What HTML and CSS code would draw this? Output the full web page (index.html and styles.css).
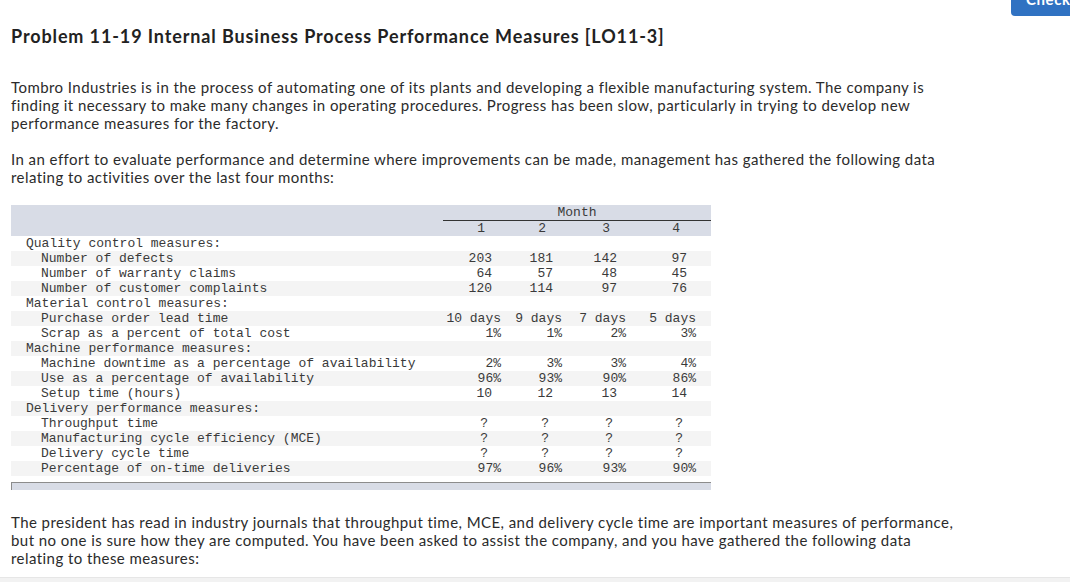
FILE: index.html
```html
<!DOCTYPE html>
<html lang="en">
<head>
<meta charset="utf-8">
<title>Problem 11-19</title>
<link rel="stylesheet" href="styles.css">
</head>
<body>
<div class="topbar"><button class="check">Check</button></div>
<main class="page">
  <h1 class="title">Problem 11-19 Internal Business Process Performance Measures [LO11-3]</h1>
  <p class="para">Tombro Industries is in the process of automating one of its plants and developing a flexible manufacturing system. The company is finding it necessary to make many changes in operating procedures. Progress has been slow, particularly in trying to develop new performance measures for the factory.</p>
  <p class="para">In an effort to evaluate performance and determine where improvements can be made, management has gathered the following data relating to activities over the last four months:</p>

  <div class="tablewrap">
    <table class="data">
      <colgroup>
        <col class="c-label"><col class="c1"><col class="c2"><col class="c3"><col class="c4"><col class="c5">
      </colgroup>
      <thead>
        <tr><th></th><th colspan="5" class="month">Month</th></tr>
        <tr><th></th><th class="hn">1</th><th class="hn">2</th><th class="hn">3</th><th class="hn">4</th><th></th></tr>
      </thead>
      <tbody>
        <tr><td class="cat">Quality control measures:</td><td></td><td></td><td></td><td></td><td></td></tr>
        <tr><td class="sub">Number of defects</td><td class="n">203</td><td class="n">181</td><td class="n">142</td><td class="n">97</td><td></td></tr>
        <tr><td class="sub">Number of warranty claims</td><td class="n">64</td><td class="n">57</td><td class="n">48</td><td class="n">45</td><td></td></tr>
        <tr><td class="sub">Number of customer complaints</td><td class="n">120</td><td class="n">114</td><td class="n">97</td><td class="n">76</td><td></td></tr>
        <tr><td class="cat">Material control measures:</td><td></td><td></td><td></td><td></td><td></td></tr>
        <tr><td class="sub">Purchase order lead time</td><td class="p">10 days</td><td class="p">9 days</td><td class="p">7 days</td><td class="p">5 days</td><td></td></tr>
        <tr><td class="sub">Scrap as a percent of total cost</td><td class="p">1%</td><td class="p">1%</td><td class="p">2%</td><td class="p">3%</td><td></td></tr>
        <tr><td class="cat">Machine performance measures:</td><td></td><td></td><td></td><td></td><td></td></tr>
        <tr><td class="sub">Machine downtime as a percentage of availability</td><td class="p">2%</td><td class="p">3%</td><td class="p">3%</td><td class="p">4%</td><td></td></tr>
        <tr><td class="sub">Use as a percentage of availability</td><td class="p">96%</td><td class="p">93%</td><td class="p">90%</td><td class="p">86%</td><td></td></tr>
        <tr><td class="sub">Setup time (hours)</td><td class="n">10</td><td class="n">12</td><td class="n">13</td><td class="n">14</td><td></td></tr>
        <tr><td class="cat">Delivery performance measures:</td><td></td><td></td><td></td><td></td><td></td></tr>
        <tr><td class="sub">Throughput time</td><td class="q">?</td><td class="q">?</td><td class="q">?</td><td class="q">?</td><td></td></tr>
        <tr><td class="sub">Manufacturing cycle efficiency (MCE)</td><td class="q">?</td><td class="q">?</td><td class="q">?</td><td class="q">?</td><td></td></tr>
        <tr><td class="sub">Delivery cycle time</td><td class="q">?</td><td class="q">?</td><td class="q">?</td><td class="q">?</td><td></td></tr>
        <tr><td class="sub">Percentage of on-time deliveries</td><td class="p">97%</td><td class="p">96%</td><td class="p">93%</td><td class="p">90%</td><td></td></tr>
      </tbody>
    </table>
    <div class="tablefoot"></div>
  </div>

  <p class="para after">The president has read in industry journals that throughput time, MCE, and delivery cycle time are important measures of performance, but no one is sure how they are computed. You have been asked to assist the company, and you have gathered the following data relating to these measures:</p>
</main>
<div class="bottomstrip"></div>
</body>
</html>
```

FILE: styles.css
```css
html, body {
  margin: 0;
  padding: 0;
  background: #ffffff;
  overflow: hidden;
}

body {
  font-family: Lato, "Open Sans", "Liberation Sans", sans-serif;
  color: #222222;
  height: 582px;
  position: relative;
}

.topbar {
  display: flex;
  justify-content: flex-end;
  height: 16px;
}

.check {
  margin-top: -18px;
  margin-right: -12px;
  height: 34px;
  width: 71px;
  padding: 0 0 0 15px;
  text-align: left;
  border: none;
  border-radius: 4px;
  background: #3072c2;
  color: #ffffff;
  font-family: Lato, "Liberation Sans", sans-serif;
  font-weight: 700;
  font-size: 15px;
  letter-spacing: 0.6px;
  line-height: 34px;
}

.page {
  padding: 0 11px;
}

.title {
  margin: 9px 0 31px;
  font-size: 18px;
  line-height: 22px;
  font-weight: 700;
  letter-spacing: 0.88px;
  color: #222222;
}

.para {
  margin: 0 0 18px;
  width: 955px;
  font-size: 15px;
  line-height: 18px;
  letter-spacing: 0.44px;
  color: #2b2b2b;
}

.tablewrap {
  margin-top: 19px;
  width: 700px;
}

.data {
  border-collapse: collapse;
  table-layout: fixed;
  width: 700px;
  font-family: "Courier New", "Nimbus Mono PS", "FreeMono", "Liberation Mono", monospace;
  font-size: 13px;
  line-height: 15px;
  color: #3a3a3a;
}

.c-label { width: 432px; }
.c1 { width: 58px; }
.c2 { width: 61px; }
.c3 { width: 64px; }
.c4 { width: 70px; }
.c5 { width: 15px; }

.data th,
.data td {
  padding: 0;
  height: 15px;
  font-weight: normal;
  white-space: pre;
  overflow: visible;
}

.data thead tr {
  background: #d8dce6;
}

.data thead .month {
  text-align: center;
  border-bottom: 1px solid #333333;
}

.data thead .hn {
  text-align: right;
  padding-right: 16px;
}

.data tbody tr:nth-child(even) {
  background: #f4f4f4;
}

.data .cat {
  padding-left: 15px;
  text-align: left;
}

.data .sub {
  padding-left: 30px;
  text-align: left;
}

.data .n {
  text-align: right;
  padding-right: 9px;
}

.data .p {
  text-align: right;
}

.data .q {
  text-align: right;
  padding-right: 13px;
}

.tablefoot {
  margin-top: 6px;
  height: 7px;
  background: #d8dce6;
  border-top: 1px solid #8c8c8c;
  border-left: 1px solid #8c8c8c;
}

.para.after {
  margin-top: 23px;
}

.bottomstrip {
  position: absolute;
  left: 0;
  right: 0;
  top: 577px;
  height: 5px;
  background: #f2f2f2;
  border-top: 1px solid #e6e6e6;
}
```
